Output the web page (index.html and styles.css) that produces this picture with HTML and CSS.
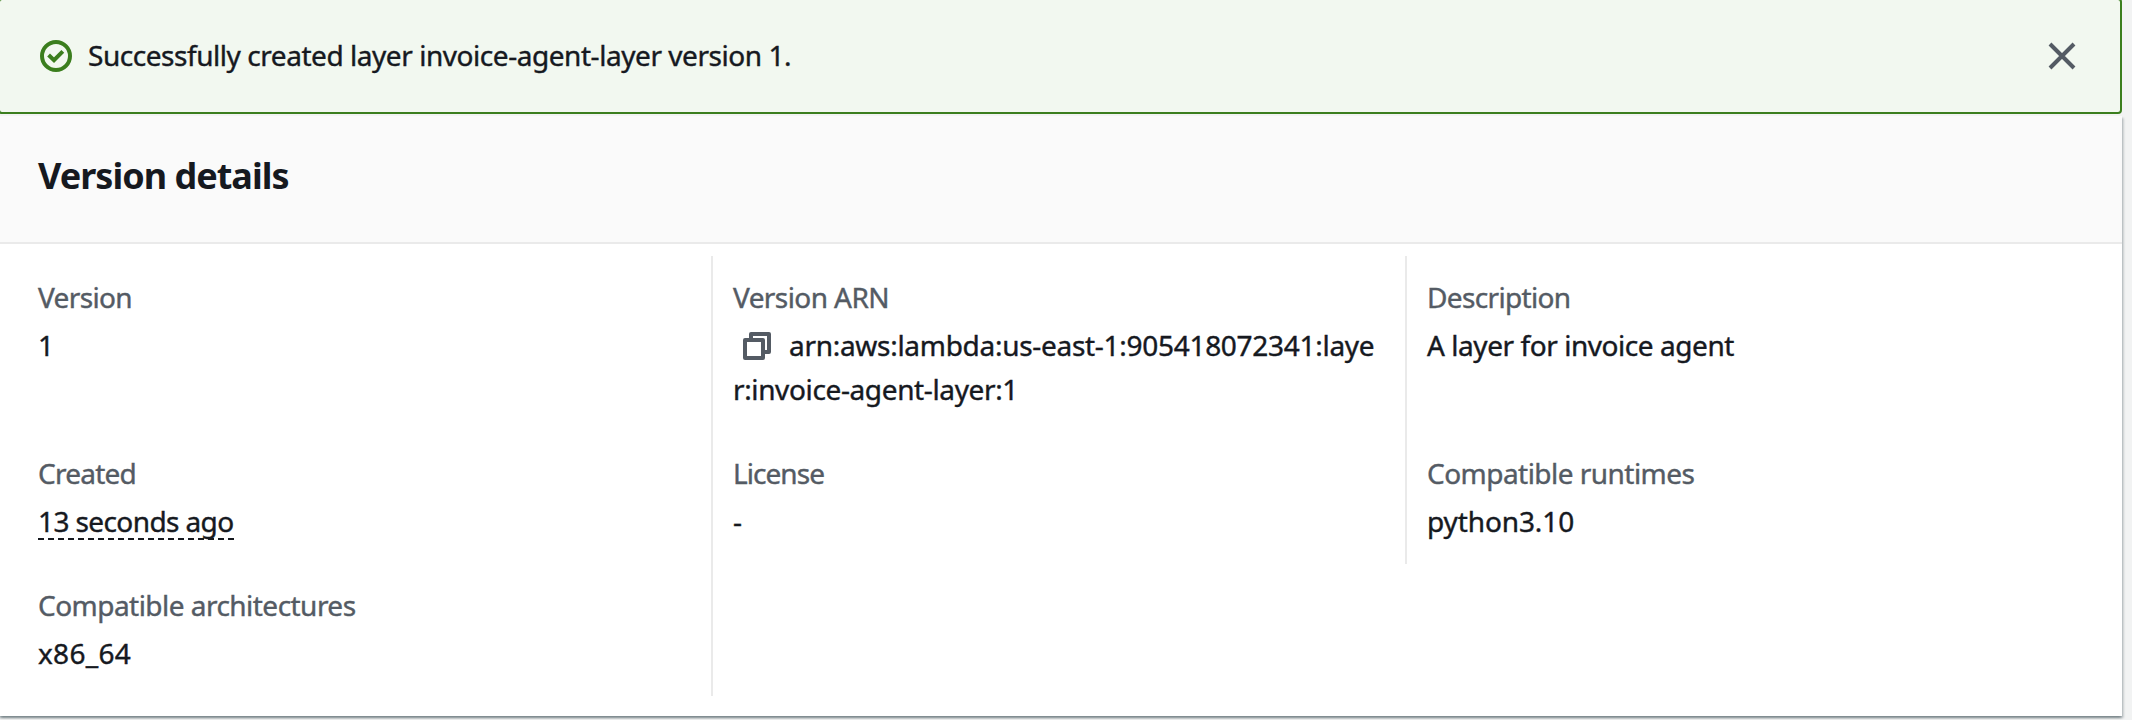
FILE: index.html
```html
<!DOCTYPE html>
<html lang="en">
<head>
<meta charset="utf-8">
<title>Version details</title>
<link rel="stylesheet" href="styles.css">
</head>
<body>
<div class="flash">
  <svg class="flash-icon" viewBox="0 0 32 32" fill="none" stroke="#3b7e1e" stroke-width="4"><circle cx="16" cy="16" r="14"/><path d="M8.6 15 14 20.2 22.8 11.4"/></svg>
  <p class="flash-text">Successfully created layer invoice-agent-layer version 1.</p>
  <button class="close" aria-label="Dismiss"><svg viewBox="0 0 28 28" fill="none" stroke="#545b64" stroke-width="4"><path d="M2 2 26 26M26 2 2 26"/></svg></button>
</div>
<section class="panel">
  <header class="panel-header"><h2 class="title">Version details</h2></header>
  <div class="columns">
    <div class="column first">
      <div class="cell tall"><div class="label t-version">Version</div><div class="value">1</div></div>
      <div class="cell"><div class="label t-created">Created</div><div class="value"><span class="ago">13 seconds ago</span></div></div>
      <div class="cell"><div class="label">Compatible architectures</div><div class="value t-arch">x86_64</div></div>
    </div>
    <div class="column ruled">
      <div class="cell tall"><div class="label t-arn-label">Version ARN</div><div class="value t-arn"><svg class="copy" viewBox="0 0 28 28" fill="none" stroke="#545b64" stroke-width="4" stroke-linejoin="round"><path d="M2 8h18v18H2z"/><path d="M8 8V2h18v18h-6"/></svg>arn:aws:lambda:us-east-1:905418072341:laye<br><span class="t-arn-rest">r:invoice-agent-layer:1</span></div></div>
      <div class="cell"><div class="label t-license">License</div><div class="value">-</div></div>
    </div>
    <div class="column ruled last">
      <div class="cell tall"><div class="label t-description">Description</div><div class="value t-layer">A layer for invoice agent</div></div>
      <div class="cell"><div class="label">Compatible runtimes</div><div class="value t-runtime">python3.10</div></div>
    </div>
  </div>
</section>
</body>
</html>
```
FILE: styles.css
```css
* { box-sizing: border-box; }
body {
  margin: 0;
  height: 720px;
  overflow: hidden;
  background: #f2f3f3;
  color: #16191f;
  font: 28px/44px "Noto Sans", "Open Sans", sans-serif;
  -webkit-text-stroke: 0.4px currentColor;
}
.flash {
  display: flex;
  align-items: center;
  width: 2124px;
  height: 116px;
  margin: -2px 0 2px -2px;
  padding: 0 44px 0 40px;
  border: 2px solid #3b7e1e;
  border-radius: 4px;
  background: #f2f8f0;
}
.flash-icon { width: 32px; height: 32px; flex: none; }
.flash-text { margin: 0 auto 2px 16px; letter-spacing: -0.45px; white-space: nowrap; }
.close { display: flex; padding: 0; border: 0; background: none; }
.close svg { width: 28px; height: 28px; }
.panel {
  width: 2122px;
  height: 600px;
  background: #fff;
  box-shadow: 0 2px 2px 0 rgba(0, 28, 36, .3), 2px 2px 2px 0 rgba(0, 28, 36, .15), -2px 2px 2px 0 rgba(0, 28, 36, .15);
}
.panel-header {
  height: 128px;
  padding: 38px 38px 0;
  background: #fafafa;
  border-bottom: 2px solid #eaeaea;
}
.title { margin: 0; font-size: 36px; line-height: 44px; letter-spacing: -0.99px; -webkit-text-stroke: 0; }
.columns { display: flex; align-items: flex-start; padding-top: 12px; }
.column { width: 694px; }
.first { width: 711px; padding-left: 38px; }
.ruled { padding-left: 20px; border-left: 2px solid #eaeaea; height: 440px; }
.last { height: 308px; }
.cell { height: 132px; padding-top: 19px; }
.tall { height: 176px; }
.label { margin-bottom: 4px; color: #545b64; letter-spacing: -0.53px; }
.value { white-space: nowrap; }
.copy { width: 28px; height: 28px; margin: 0 18px 0 10px; vertical-align: -4px; }
.ago { display: inline-block; height: 41px; line-height: 44px; border-bottom: 2px dashed #16191f; letter-spacing: -0.6px; }
.t-version { letter-spacing: -0.64px; }
.t-created { letter-spacing: -0.76px; }
.t-license { letter-spacing: -0.95px; }
.t-arn-label { letter-spacing: -0.58px; }
.t-description { letter-spacing: -0.65px; }
.t-arn { letter-spacing: -0.29px; }
.t-arn-rest { letter-spacing: -0.37px; }
.t-layer { letter-spacing: -0.44px; }
.t-runtime { letter-spacing: -0.11px; }
.t-arch { letter-spacing: 0.28px; }
```
